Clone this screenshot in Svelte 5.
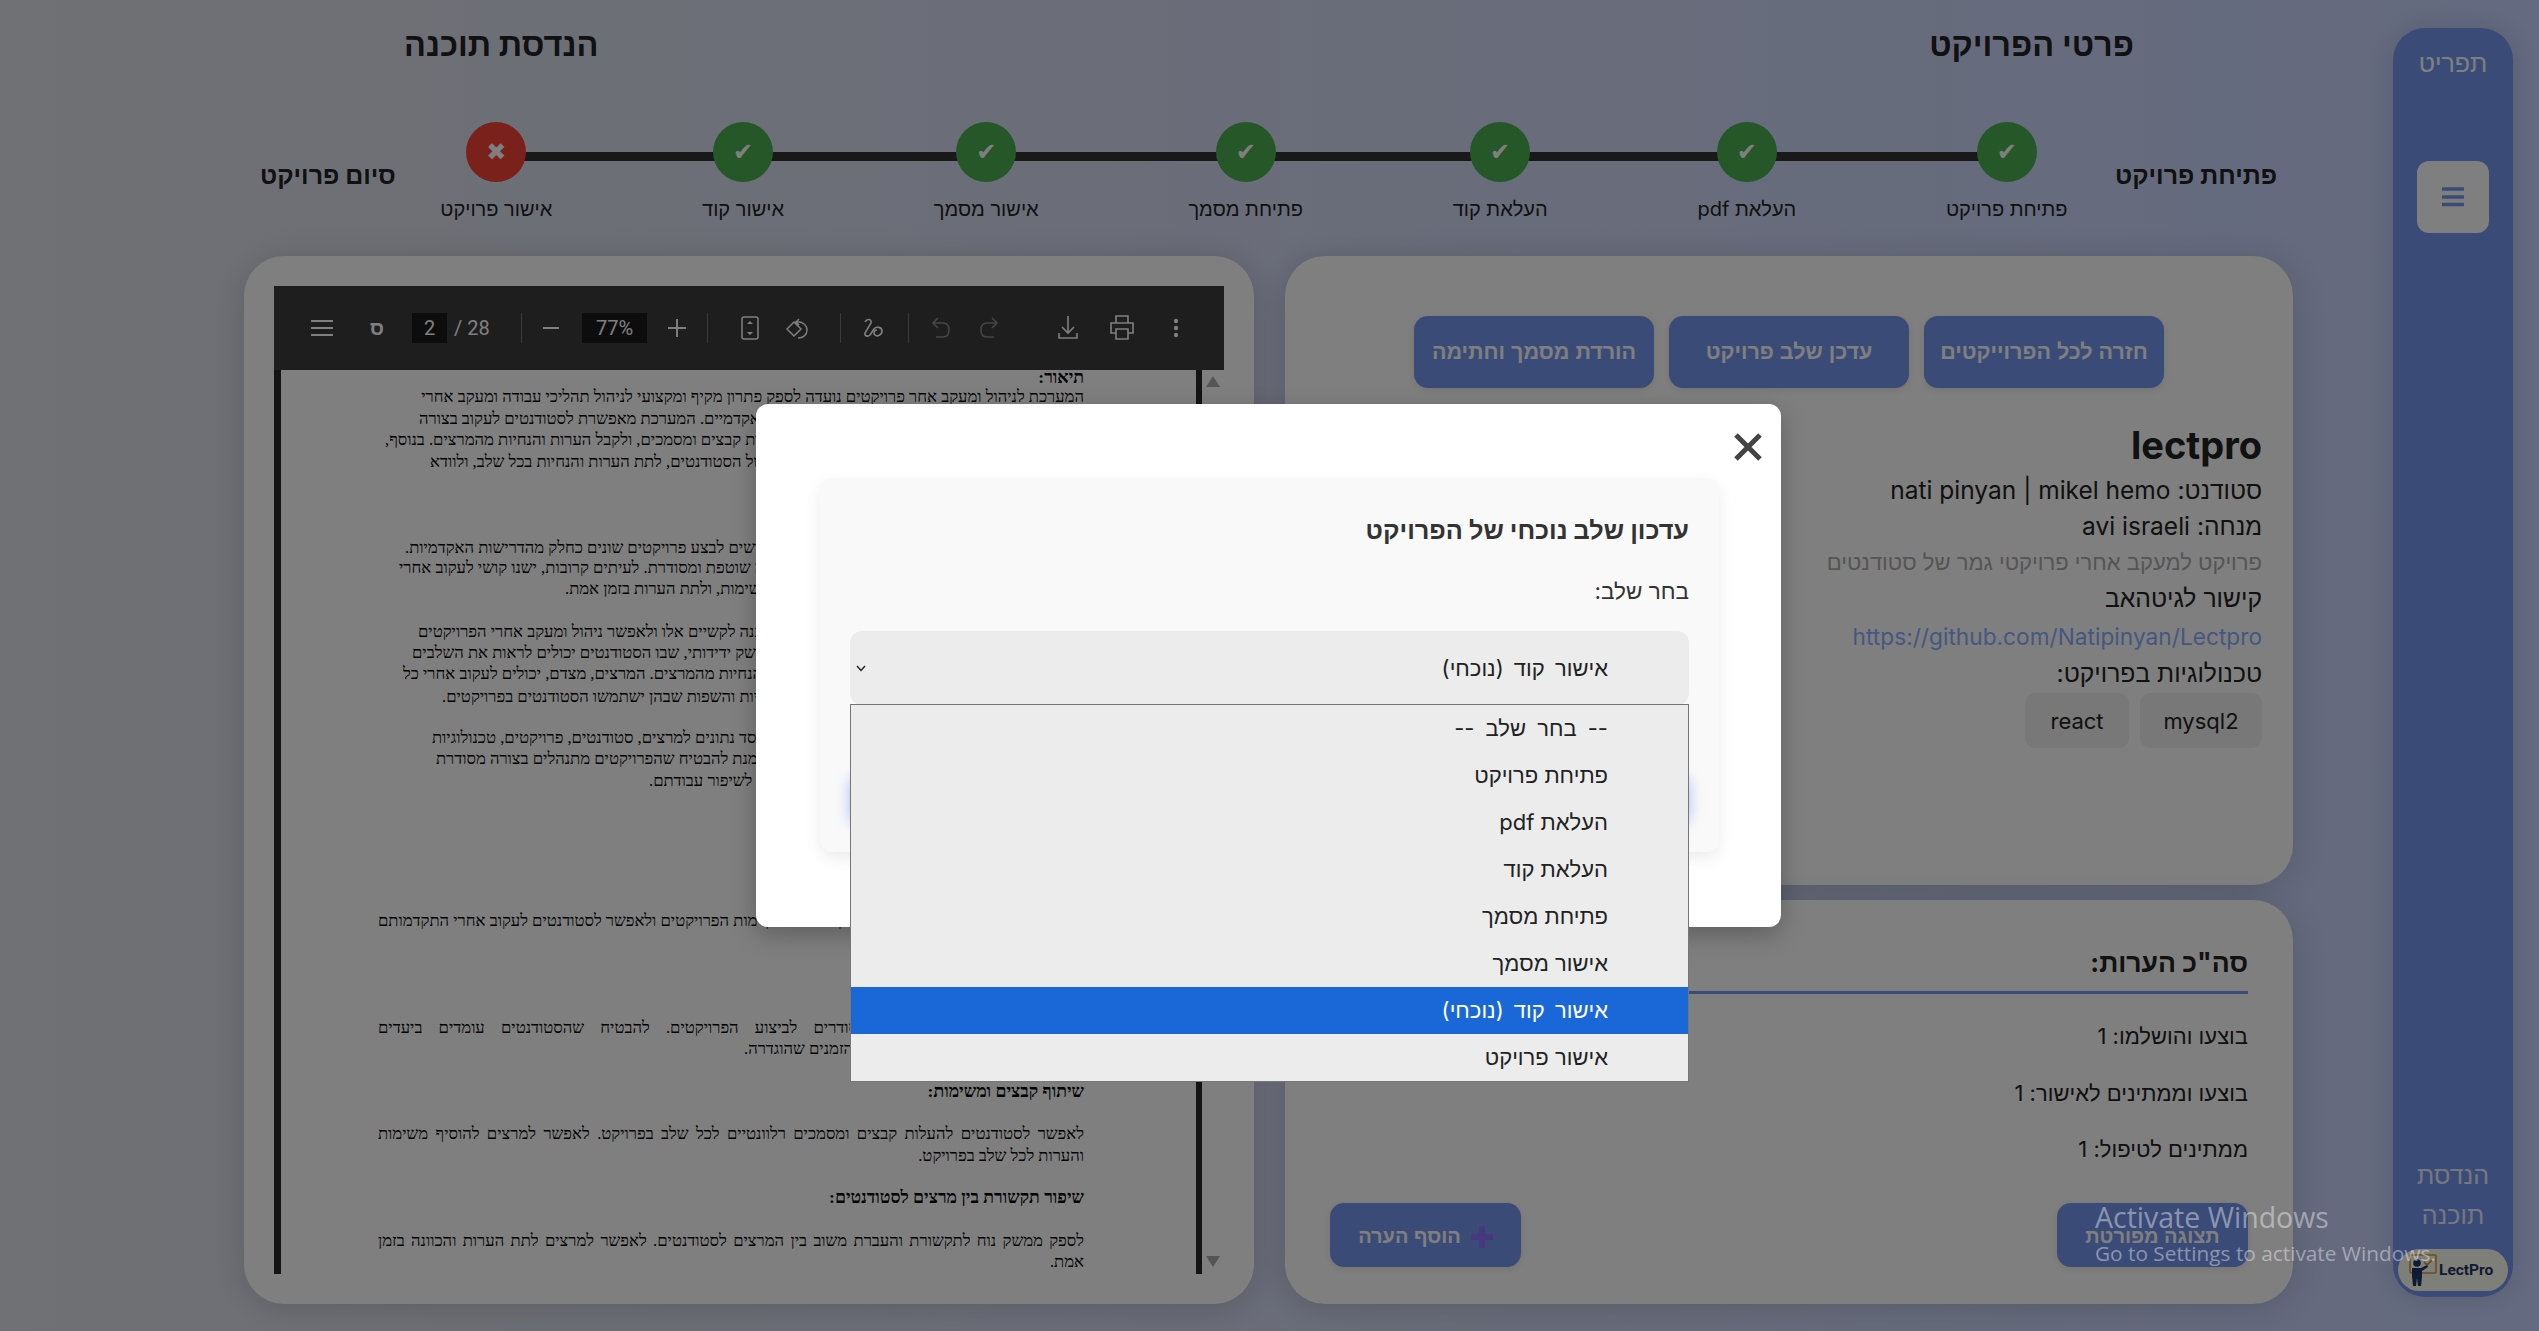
<script>
  const steps = [
    { label: "פתיחת פרויקט", done: true },
    { label: "העלאת pdf", done: true },
    { label: "העלאת קוד", done: true },
    { label: "פתיחת מסמך", done: true },
    { label: "אישור מסמך", done: true },
    { label: "אישור קוד", done: true },
    { label: "אישור פרויקט", done: false }
  ];

  const options = [
    "-- בחר שלב --",
    "פתיחת פרויקט",
    "העלאת pdf",
    "העלאת קוד",
    "פתיחת מסמך",
    "אישור מסמך",
    "אישור קוד (נוכחי)",
    "אישור פרויקט"
  ];

  // y = line centre on the page, x = left edge for lines whose right end sits behind the dialog
  const rawLines = [
    { y: 377, t: "תיאור:", b: true },
    { y: 396, t: "המערכת לניהול ומעקב אחר פרויקטים נועדה לספק פתרון מקיף ומקצועי לניהול תהליכי עבודה ומעקב אחרי" },
    { y: 418, x: 419, t: "פרויקטים אקדמיים. המערכת מאפשרת לסטודנטים לעקוב בצורה" },
    { y: 439, x: 385, t: "ברורה אחר כל שלב, להעלות קבצים ומסמכים, ולקבל הערות והנחיות מהמרצים. בנוסף," },
    { y: 461, x: 430, t: "המרצים יכולים לעקוב אחר עבודתם של הסטודנטים, לתת הערות והנחיות בכל שלב, ולוודא" },
    { y: 547, x: 405, t: "סטודנטים נדרשים לבצע פרויקטים שונים כחלק מהדרישות האקדמיות." },
    { y: 567, x: 399, t: "תהליך זה דורש עבודה שוטפת ומסודרת. לעיתים קרובות, ישנו קושי לעקוב אחרי" },
    { y: 588, x: 565, t: "קבצים, משימות, ולתת הערות בזמן אמת." },
    { y: 631, x: 418, t: "המערכת נותנת מענה לקשיים אלו ולאפשר ניהול ומעקב אחרי הפרויקטים" },
    { y: 652, x: 412, t: "באמצעות ממשק ידידותי, שבו הסטודנטים יכולים לראות את השלבים" },
    { y: 673, x: 403, t: "ולקבל הערות והנחיות מהמרצים. המרצים, מצדם, יכולים לעקוב אחרי כל" },
    { y: 696, x: 442, t: "הטכנולוגיות והשפות שבהן ישתמשו הסטודנטים בפרויקטים." },
    { y: 737, x: 432, t: "ניהול מסד נתונים למרצים, סטודנטים, פרויקטים, טכנולוגיות" },
    { y: 758, x: 436, t: "וכל זאת על מנת להבטיח שהפרויקטים מתנהלים בצורה מסודרת" },
    { y: 780, x: 649, t: "וכלים לשיפור עבודתם." },
    { y: 920, x: 377, t: "מעקב אחר התקדמות הפרויקטים ולאפשר לסטודנטים לעקוב אחרי התקדמותם" },
    { y: 1027, j: true, t: "ליצור לוחות זמנים ברורים ומסודרים לביצוע הפרויקטים. להבטיח שהסטודנטים עומדים ביעדים" },
    { y: 1048, x: 744, t: "ובלוחות הזמנים שהוגדרה." },
    { y: 1091, t: "שיתוף קבצים ומשימות:", b: true },
    { y: 1133, j: true, t: "לאפשר לסטודנטים להעלות קבצים ומסמכים רלוונטיים לכל שלב בפרויקט. לאפשר למרצים להוסיף משימות" },
    { y: 1155, t: "והערות לכל שלב בפרויקט." },
    { y: 1197, t: "שיפור תקשורת בין מרצים לסטודנטים:", b: true },
    { y: 1240, j: true, t: "לספק ממשק נוח לתקשורת והעברת משוב בין המרצים לסטודנטים. לאפשר למרצים לתת הערות והכוונה בזמן" },
    { y: 1261, t: "אמת." }
  ];

  const lineHeight = 21;
  const lines = rawLines.map((l, i) => ({
    ...l,
    gap: l.y - (i ? rawLines[i - 1].y : 370 - lineHeight / 2) - lineHeight,
    indent: l.x ? l.x - 378 : 0
  }));
</script>

<div class="shell" dir="rtl">
  <aside class="sidebar">
    <div class="side-title">תפריט</div>
    <button class="burger" type="button" aria-label="תפריט">
      <svg width="22" height="20" viewBox="0 0 22 20"><path d="M1 2h20M1 10h20M1 17.500h20" stroke="#7696f0" stroke-width="3.400" stroke-linecap="round"/></svg>
    </button>
    <div class="side-bottom">הנדסת<br />תוכנה</div>
    <div class="logo" dir="ltr">
      <svg width="30" height="32" viewBox="0 0 30 32">
        <rect x="3" y="1" width="26" height="18" rx="1" fill="none" stroke="#d79a3a" stroke-width="1.600"/>
        <path d="M17 8l3 3 5-5" fill="none" stroke="#d79a3a" stroke-width="1.800"/>
        <circle cx="10" cy="9" r="3.800" fill="#1f3568"/>
        <path d="M5 14h9l6-3 1 2-6 4v6l-1 9h-3l-1-8-1 8H6l-1-10z" fill="#1f3568"/>
      </svg>
      <span>LectPro</span>
    </div>
  </aside>

  <main class="main">
    <header class="heads">
      <h2>פרטי הפרויקט</h2>
      <h2>הנדסת תוכנה</h2>
    </header>

    <section class="stepper">
      <div class="end">פתיחת פרויקט</div>
      <div class="track">
        {#each steps as s}
          <div class="step">
            <span class="dot" class:bad={!s.done}>{s.done ? "✔" : "✖"}</span>
            <span class="step-label">{s.label}</span>
          </div>
        {/each}
      </div>
      <div class="end">סיום פרויקט</div>
    </section>

    <section class="columns">
      <div class="right-col">
        <div class="panel details">
          <div class="actions">
            <button type="button" class="btn">חזרה לכל הפרוייקטים</button>
            <button type="button" class="btn">עדכן שלב פרויקט</button>
            <button type="button" class="btn">הורדת מסמך וחתימה</button>
          </div>
          <h1>lectpro</h1>
          <p class="row">סטודנט: nati pinyan | mikel hemo</p>
          <p class="row">מנחה: avi israeli</p>
          <p class="row desc">פרויקט למעקב אחרי פרויקטי גמר של סטודנטים</p>
          <p class="row big">קישור לגיטהאב</p>
          <a class="row link" href="#top">https://github.com/Natipinyan/Lectpro</a>
          <p class="row big">טכנולוגיות בפרויקט:</p>
          <div class="tags">
            <span class="tag wide">mysql2</span>
            <span class="tag">react</span>
          </div>
        </div>

        <div class="panel stats">
          <h3>סה"כ הערות:</h3>
          <p>בוצעו והושלמו: 1</p>
          <p>בוצעו וממתינים לאישור: 1</p>
          <p>ממתינים לטיפול: 1</p>
          <div class="stat-actions">
            <button type="button" class="btn small">תצוגה מפורטת</button>
            <button type="button" class="btn small add">
              <svg width="22" height="22" viewBox="0 0 22 22"><path d="M11 0v22M0 11h22" stroke="#9070ff" stroke-width="6"/></svg>
              הוסף הערה
            </button>
          </div>
        </div>
      </div>

      <div class="panel pdf-panel">
        <div class="viewer" dir="ltr">
          <div class="toolbar">
            <span class="tb">
              <svg width="22" height="18" viewBox="0 0 22 18"><path d="M0 2h22M0 9h22M0 16h22" stroke="#fff" stroke-width="2"/></svg>
            </span>
            <span class="tb ml-11 samekh">ס</span>
            <span class="field ml-13 page-no">2</span>
            <span class="count ml-7">/ 28</span>
            <span class="sep ml-32"></span>
            <span class="tb ml-7">
              <svg width="16" height="4" viewBox="0 0 16 4"><path d="M0 2h16" stroke="#fff" stroke-width="2"/></svg>
            </span>
            <span class="field ml-9 zoom">77%</span>
            <span class="tb ml-8">
              <svg width="18" height="18" viewBox="0 0 18 18"><path d="M9 0v18M0 9h18" stroke="#fff" stroke-width="2"/></svg>
            </span>
            <span class="sep ml-8"></span>
            <span class="tb ml-20">
              <svg width="18" height="24" viewBox="0 0 18 24"><rect x="1" y="1" width="16" height="22" rx="2" fill="none" stroke="#fff" stroke-width="1.500"/><path d="M9 5l3 3H6zM9 19l3-3H6z" fill="#fff"/></svg>
            </span>
            <span class="tb ml-4">
              <svg width="26" height="26" viewBox="0 0 26 26"><path d="M2 14l7-7 7 7-7 7z M14 4l-3 3 3 3 M11 7c6-1 11 3 11 8 0 5-4 8-9 8" fill="none" stroke="#fff" stroke-width="1.500"/></svg>
            </span>
            <span class="sep ml-20"></span>
            <span class="tb ml-11">
              <svg width="24" height="24" viewBox="0 0 24 24"><path d="M3 6c2-4 7-3 6 1L3 17c-1 3 3 4 5 2l4-6c2-3 8-2 8 2s-5 6-7 4-1-5 2-5" fill="none" stroke="#fff" stroke-width="1.600"/></svg>
            </span>
            <span class="sep ml-12"></span>
            <span class="tb ml-10 dim">
              <svg width="20" height="22" viewBox="0 0 20 22"><path d="M7 1L2 6l5 5M2 6h10c4 0 6 3 6 7s-2 7-6 7H5" fill="none" stroke="#fff" stroke-width="1.600"/></svg>
            </span>
            <span class="tb ml-4 dim">
              <svg width="20" height="22" viewBox="0 0 20 22"><path d="M13 1l5 5-5 5M18 6H8c-4 0-6 3-6 7s2 7 6 7h7" fill="none" stroke="#fff" stroke-width="1.600"/></svg>
            </span>
            <span class="tb push">
              <svg width="20" height="24" viewBox="0 0 20 24"><path d="M10 0v17M4 11l6 6 6-6M1 17v5h18v-5" fill="none" stroke="#fff" stroke-width="1.600"/></svg>
            </span>
            <span class="tb ml-10">
              <svg width="26" height="26" viewBox="0 0 26 26"><path d="M7 8V1h12v7M7 18H2V8h22v10h-5M7 14h12v10H7z" fill="none" stroke="#fff" stroke-width="1.600"/></svg>
            </span>
            <span class="tb ml-10">
              <svg width="6" height="20" viewBox="0 0 6 20"><circle cx="3" cy="3" r="2.200" fill="#fff"/><circle cx="3" cy="10" r="2.200" fill="#fff"/><circle cx="3" cy="17" r="2.200" fill="#fff"/></svg>
            </span>
          </div>
          <div class="doc">
            <div class="edge left"></div>
            <div class="page" dir="rtl">
              {#each lines as l}
                <div
                  class="line"
                  class:bold={l.b}
                  class:just={l.j}
                  class:anchored={l.x}
                  style="margin-top:{l.gap}px;padding-left:{l.indent}px"
                >{l.t}</div>
              {/each}
            </div>
            <div class="edge"></div>
            <div class="scroll">
              <span class="arrow up"></span>
              <span class="arrow"></span>
            </div>
          </div>
        </div>
      </div>
    </section>
  </main>

  <div class="overlay">
    <div class="modal">
      <button class="close" type="button" aria-label="סגור">
        <svg width="28" height="28" viewBox="0 0 28 28"><path d="M2 2l24 24M26 2L2 26" stroke="#444" stroke-width="5"/></svg>
      </button>
      <div class="form-card">
        <h4>עדכון שלב נוכחי של הפרויקט</h4>
        <div class="form-label">בחר שלב:</div>
        <div class="select">
          <span class="picked">אישור קוד (נוכחי)</span>
          <svg class="chev" width="10" height="7" viewBox="0 0 10 7"><path d="M1 1l4 4.500L9 1" fill="none" stroke="#222" stroke-width="1.400"/></svg>
          <div class="listbox">
            {#each options as o, i}
              <div class="option" class:current={i === 6}>{o}</div>
            {/each}
          </div>
        </div>
        <button class="submit" type="button">עדכן</button>
      </div>
    </div>
  </div>

  <div class="activate" dir="ltr">
    <div class="a1">Activate Windows</div>
    <div class="a2">Go to Settings to activate Windows.</div>
  </div>
</div>

<style>
  :global(body) {
    margin: 0;
    background: #fff;
  }

  .shell {
    position: relative;
    display: flex;
    gap: 100px;
    width: 2539px;
    height: 1331px;
    overflow: hidden;
    box-sizing: border-box;
    padding-right: 26px;
    background: linear-gradient(90deg, #e0e2e8, #c8d4ff);
    font-family: Inter, "Liberation Sans", sans-serif;
    color: #222;
  }

  .sidebar {
    display: flex;
    flex-direction: column;
    align-items: center;
    flex: none;
    box-sizing: border-box;
    width: 120px;
    height: 1269px;
    margin-top: 28px;
    padding: 20px 0 6px;
    border-radius: 32px;
    background: #7696f0;
    box-shadow: 0 0 24px rgba(0, 0, 0, 0.12);
    color: #fff;
  }

  .side-title {
    font-size: 25px;
    line-height: 30px;
  }

  .burger {
    display: flex;
    align-items: center;
    justify-content: center;
    width: 72px;
    height: 72px;
    margin-top: 83px;
    padding: 0;
    border: 0;
    border-radius: 12px;
    background: #fff;
  }

  .side-bottom {
    margin-top: auto;
    font-size: 25px;
    line-height: 40px;
    text-align: center;
    opacity: 0.85;
  }

  .logo {
    display: flex;
    align-items: center;
    gap: 2px;
    box-sizing: border-box;
    width: 110px;
    height: 42px;
    margin-top: 14px;
    padding-left: 9px;
    border-radius: 21px;
    background: #fffff4;
    color: #1f3568;
    font-family: Roboto, "Liberation Sans", sans-serif;
    font-size: 15.500px;
    font-weight: 700;
  }

  .main {
    flex: none;
    width: 2049px;
  }

  .heads {
    display: flex;
    justify-content: space-between;
    padding: 25px 159px 0 160px;
  }

  .heads h2 {
    margin: 0;
    font-size: 32.500px;
    line-height: 40px;
    font-weight: 700;
  }

  .stepper {
    display: flex;
    gap: 47.500px;
    margin-top: 57px;
    padding: 0 16px;
  }

  .end {
    flex: none;
    margin-top: 38px;
    font-size: 25px;
    line-height: 30px;
    font-weight: 700;
  }

  .track {
    position: relative;
    display: flex;
    flex: 1;
    justify-content: space-between;
    margin-left: -3px;
  }

  .track::before {
    content: "";
    position: absolute;
    top: 30px;
    left: 50px;
    right: 50px;
    height: 9px;
    background: #333;
  }

  .step {
    position: relative;
    display: flex;
    flex-direction: column;
    align-items: center;
  }

  .dot {
    display: flex;
    align-items: center;
    justify-content: center;
    width: 60px;
    height: 60px;
    border-radius: 50%;
    background: #4caf50;
    color: #fff;
    font-family: "DejaVu Sans", sans-serif;
    font-size: 24px;
  }

  .dot.bad {
    background: #f44336;
  }

  .step-label {
    margin-top: 15px;
    font-size: 20px;
    line-height: 24px;
  }

  .columns {
    display: grid;
    grid-template-columns: 1008px 1010px;
    gap: 31px;
    height: 1048px;
    margin-top: 35px;
  }

  .right-col {
    display: flex;
    flex-direction: column;
    gap: 15px;
  }

  .panel {
    box-sizing: border-box;
    border-radius: 40px;
    background: #fff;
    box-shadow: 0 4px 34px rgba(0, 0, 0, 0.16);
  }

  .details {
    height: 629px;
    padding: 60px 31px 0;
  }

  .actions {
    display: flex;
    justify-content: center;
    gap: 15px;
  }

  .btn {
    width: 240px;
    height: 72px;
    padding: 0;
    border: 0;
    border-radius: 14px;
    background: #7696f0;
    color: #fff;
    font-family: "Liberation Sans", sans-serif;
    font-size: 21.500px;
    font-weight: 700;
    box-shadow: 0 2px 8px rgba(0, 0, 0, 0.1);
  }

  .details h1 {
    margin: 35px 0 5px;
    font-size: 38px;
    line-height: 44px;
    font-weight: 700;
  }

  .row {
    display: block;
    margin: 0;
    font-size: 24.500px;
    line-height: 36px;
  }

  .desc {
    color: #aaa;
    font-size: 22px;
  }

  .big {
    font-size: 24.700px;
  }

  .link {
    margin-top: 3px;
    color: #8caeff;
    font-size: 22.700px;
    text-decoration: none;
  }

  .tags {
    display: flex;
    gap: 11px;
    margin-top: 2px;
  }

  .tag {
    display: flex;
    align-items: center;
    justify-content: center;
    width: 104px;
    height: 55px;
    border-radius: 10px;
    background: #f0f0f0;
    font-size: 22px;
  }

  .tag.wide {
    width: 122px;
  }

  .stats {
    display: flex;
    flex-direction: column;
    height: 404px;
    padding: 45px 45px 37px;
  }

  .stats h3 {
    margin: 0 0 27px;
    padding-bottom: 12px;
    border-bottom: 3px solid #7696f0;
    font-size: 26.600px;
    line-height: 34px;
  }

  .stats p {
    margin: 0 0 26.500px;
    font-size: 22px;
    line-height: 30px;
  }

  .stat-actions {
    display: flex;
    justify-content: space-between;
    margin-top: auto;
  }

  .btn.small {
    width: 191px;
    height: 64px;
    padding-top: 3px;
    font-size: 20px;
  }

  .add {
    display: flex;
    align-items: center;
    justify-content: center;
    gap: 10px;
  }

  .pdf-panel {
    padding: 30px;
  }

  .viewer {
    display: flex;
    flex-direction: column;
    height: 100%;
  }

  .toolbar {
    position: relative;
    z-index: 1;
    display: flex;
    align-items: center;
    flex: none;
    box-sizing: border-box;
    height: 84px;
    padding: 0 26px;
    background: #3c3c3c;
    color: #fff;
    font-family: Roboto, "Liberation Sans", sans-serif;
    font-size: 20px;
  }

  .tb {
    display: flex;
    align-items: center;
    justify-content: center;
    flex: none;
    width: 44px;
    height: 30px;
  }

  .dim {
    opacity: 0.4;
  }

  .samekh {
    font-family: "Liberation Sans", sans-serif;
    font-weight: 700;
    font-size: 20px;
  }

  .field {
    display: flex;
    align-items: center;
    justify-content: center;
    height: 30px;
    background: #1a1a1a;
  }

  .page-no {
    width: 35px;
  }

  .zoom {
    width: 65px;
  }

  .count {
    width: 35px;
    white-space: nowrap;
  }

  .sep {
    flex: none;
    width: 1px;
    height: 30px;
    background: #777;
  }

  .push {
    margin-left: auto;
  }

  .ml-4 { margin-left: 4px; }
  .ml-7 { margin-left: 7px; }
  .ml-8 { margin-left: 8px; }
  .ml-9 { margin-left: 9px; }
  .ml-10 { margin-left: 10px; }
  .ml-11 { margin-left: 11px; }
  .ml-12 { margin-left: 12px; }
  .ml-13 { margin-left: 13px; }
  .ml-20 { margin-left: 20px; }
  .ml-32 { margin-left: 32px; }

  .doc {
    display: flex;
    flex: 1;
    min-height: 0;
  }

  .edge {
    flex: none;
    width: 6px;
    background: #282828;
  }

  .edge.left {
    width: 7px;
  }

  .page {
    flex: 1;
    box-sizing: border-box;
    padding: 0 112px 0 97px;
    background: #fff;
    color: #000;
    font-family: "Liberation Serif", serif;
    font-size: 16.600px;
    line-height: 21px;
  }

  .line {
    white-space: nowrap;
    text-align: right;
  }

  .anchored {
    text-align: left;
  }

  .just {
    white-space: normal;
    text-align-last: justify;
  }

  .bold {
    font-size: 17.600px;
    font-weight: 700;
  }

  .scroll {
    display: flex;
    flex-direction: column;
    align-items: center;
    justify-content: space-between;
    flex: none;
    width: 22px;
    padding: 6px 0 7px;
    box-sizing: border-box;
    background: #fff;
  }

  .arrow {
    width: 0;
    height: 0;
    border-left: 7px solid transparent;
    border-right: 7px solid transparent;
    border-top: 11px solid #aaa;
  }

  .arrow.up {
    border-top: 0;
    border-bottom: 11px solid #aaa;
  }

  .overlay {
    position: absolute;
    z-index: 5;
    inset: 0;
    display: flex;
    align-items: center;
    justify-content: center;
    padding-right: 2px;
    box-sizing: border-box;
    background: rgba(0, 0, 0, 0.5);
  }

  .modal {
    position: relative;
    box-sizing: border-box;
    width: 1025px;
    height: 523px;
    padding: 74px 62px 0 64px;
    border-radius: 12px;
    background: #fff;
    box-shadow: 0 8px 24px rgba(0, 0, 0, 0.25);
  }

  .close {
    position: absolute;
    top: 29px;
    right: 19px;
    display: flex;
    padding: 0;
    border: 0;
    background: none;
  }

  .form-card {
    box-sizing: border-box;
    height: 374px;
    padding: 37px 30px 0;
    border-radius: 12px;
    background: #f9f9f9;
    box-shadow: 0 6px 16px rgba(0, 0, 0, 0.08);
  }

  .form-card h4 {
    margin: 0;
    color: #333;
    font-size: 25.300px;
    line-height: 30px;
  }

  .form-label {
    margin-top: 33px;
    color: #333;
    font-size: 22.500px;
    line-height: 26px;
  }

  .select {
    position: relative;
    display: flex;
    align-items: center;
    height: 74px;
    margin-top: 27px;
    padding-right: 81px;
    border-radius: 12px;
    background: #ececec;
    color: #222;
    font-size: 22px;
  }

  .picked {
    word-spacing: 4px;
  }

  .chev {
    position: absolute;
    left: 6px;
    top: 34px;
  }

  .listbox {
    position: absolute;
    z-index: 2;
    top: 73px;
    left: 0;
    right: 0;
    border: 1px solid #767676;
    background: #ececec;
  }

  .option {
    box-sizing: border-box;
    height: 47px;
    padding-right: 80px;
    line-height: 47px;
  }

  .option:first-child {
    word-spacing: 5px;
  }

  .option.current {
    background: #1a68d8;
    color: #fff;
    word-spacing: 4px;
  }

  .submit {
    display: block;
    width: 100%;
    height: 50px;
    margin-top: 70px;
    border: 0;
    border-radius: 12px;
    background: #7696f0;
    box-shadow: 0 0 14px rgba(118, 150, 240, 0.6);
  }

  .activate {
    position: absolute;
    z-index: 6;
    left: 2095px;
    top: 1197px;
    color: rgba(255, 255, 255, 0.42);
    font-family: "Open Sans", sans-serif;
    pointer-events: none;
  }

  .a1 {
    font-size: 28.500px;
    line-height: 40px;
  }

  .a2 {
    margin-top: 3px;
    font-size: 20.800px;
    line-height: 26px;
  }
</style>
